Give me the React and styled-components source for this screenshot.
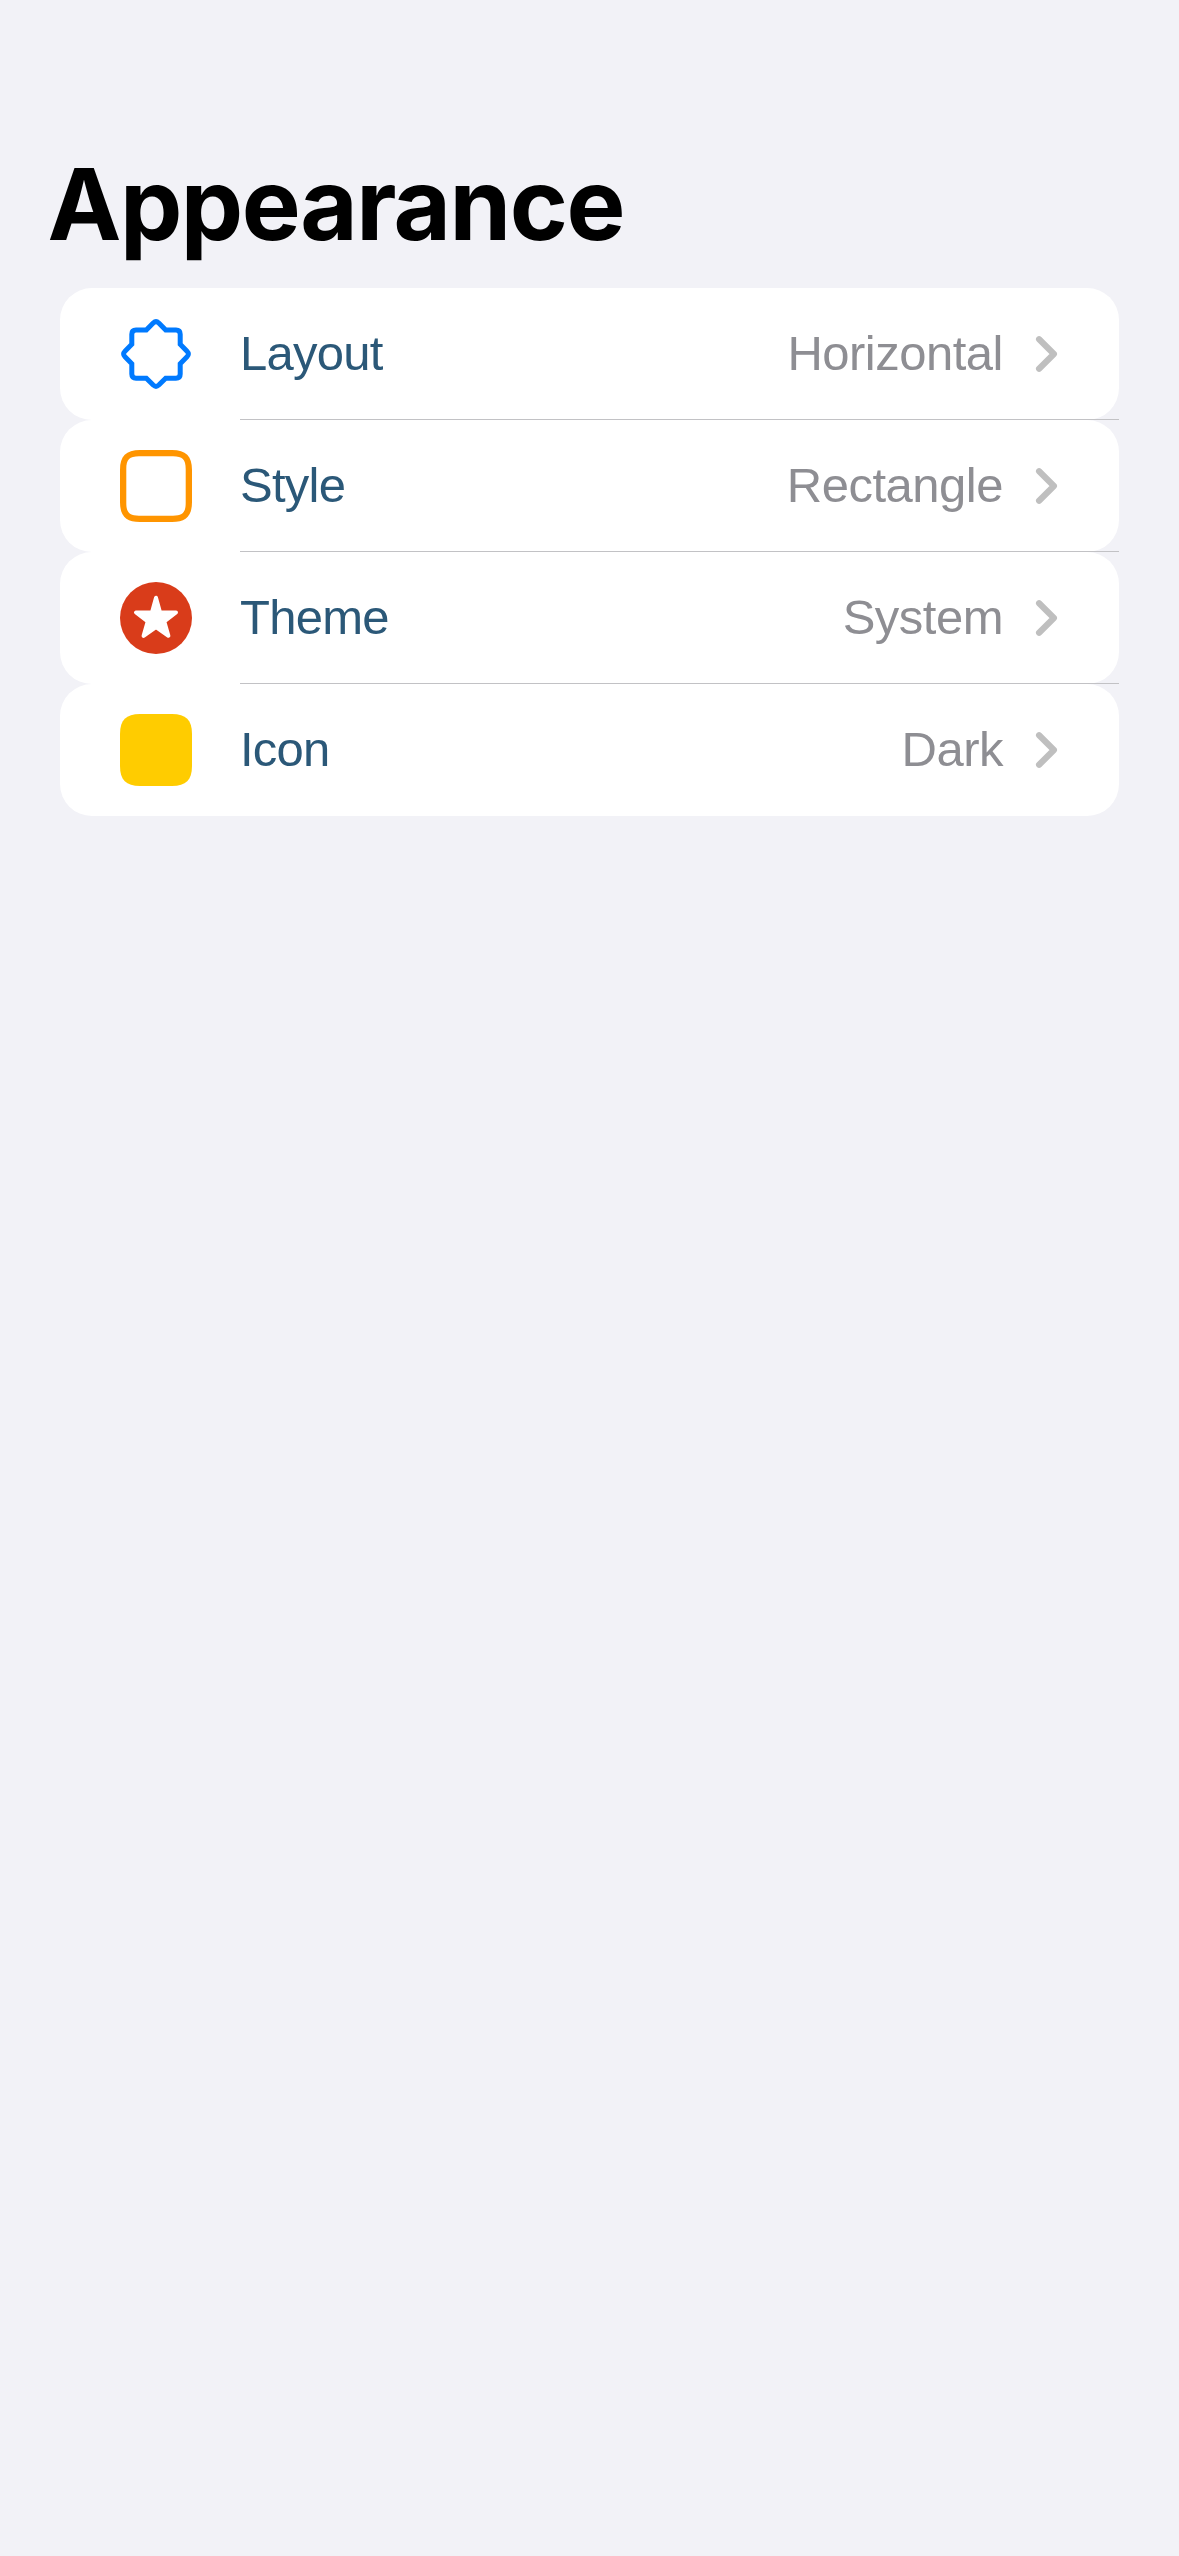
import React from "react";
import styled, { createGlobalStyle } from "styled-components";

const GlobalStyle = createGlobalStyle`
  *, *::before, *::after { box-sizing: border-box; }
  html, body { margin: 0; padding: 0; background: #f2f2f7; }
`;

const Screen = styled.main`
  width: 100%;
  min-height: 2556px;
  background: #f2f2f7;
  padding: 144px 60px 0;
  font-family: "Liberation Sans", Helvetica, Arial, sans-serif;
`;

const Title = styled.h1`
  margin: 0 0 24px -12.5px;
  height: 120px;
  line-height: 120px;
  font-family: Inter, sans-serif;
  font-size: 99px;
  font-weight: 700;
  letter-spacing: -1.5px;
  color: #000;
`;

const List = styled.ul`
  list-style: none;
  margin: 0;
  padding: 0;
  display: flex;
  flex-direction: column;
`;

const Row = styled.li`
  position: relative;
  display: flex;
  align-items: center;
  height: 132px;
  padding: 0 60px;
  background: #fff;
  border-radius: 32px;

  &:not(:last-child)::after {
    content: "";
    position: absolute;
    left: 180px;
    right: 0;
    bottom: 0;
    height: 1px;
    background: #c2c2c5;
  }
`;

const Glyph = styled.svg`
  flex: none;
  width: 72px;
  height: 72px;
  margin-right: 48px;
`;

const Label = styled.span`
  flex: 1;
  padding-bottom: 2px;
  font-size: 49px;
  line-height: 60px;
  letter-spacing: -0.75px;
  color: #2b5878;
`;

const Value = styled.span`
  padding-bottom: 2px;
  font-size: 49px;
  line-height: 60px;
  letter-spacing: -0.5px;
  color: #8e8e93;
`;

const Chevron = styled.svg`
  flex: none;
  width: 24px;
  height: 40px;
  margin-left: 32px;
`;

const SealIcon = () => (
  <Glyph viewBox="0 0 72 72" fill="none">
    <path
      d="M26.3 12 L33.2 5 Q36 2.4 38.8 5 L45.7 12 H56 Q60.2 12 60.2 16.2 V26.3 L67 33.2 Q69.8 36 67 38.8 L60.2 45.7 V56 Q60.2 60.2 56 60.2 H45.7 L38.8 67 Q36 69.6 33.2 67 L26.3 60.2 H16 Q11.8 60.2 11.8 56 V45.7 L5 38.8 Q2.2 36 5 33.2 L11.8 26.3 V16.2 Q11.8 12 16 12 Z"
      stroke="#007aff"
      strokeWidth="5"
    />
  </Glyph>
);

const FrameIcon = () => (
  <Glyph viewBox="0 0 72 72">
    <path
      fill="#ff9500"
      fillRule="evenodd"
      d="M20 0 H52 C66 0 72 6 72 20 V52 C72 66 66 72 52 72 H20 C6 72 0 66 0 52 V20 C0 6 6 0 20 0 Z M19 6.3 C9.5 6.3 6.3 9.5 6.3 19 V53 C6.3 62.5 9.5 65.7 19 65.7 H53 C62.5 65.7 65.7 62.5 65.7 53 V19 C65.7 9.5 62.5 6.3 53 6.3 Z"
    />
  </Glyph>
);

const StarIcon = () => (
  <Glyph viewBox="0 0 72 72">
    <circle cx="36" cy="36" r="36" fill="#d93c1a" />
    <path
      fill="#fff"
      stroke="#fff"
      strokeWidth="4"
      strokeLinejoin="round"
      d="M36 15.8 L40 30.2 L56 30.5 L44.3 39.5 L48.4 53.8 L36 45.2 L23.6 53.8 L27.7 39.5 L16 30.5 L32 30.2 Z"
    />
  </Glyph>
);

const SquareIcon = () => (
  <Glyph viewBox="0 0 72 72">
    <path
      fill="#ffcc00"
      d="M20 0 H52 C66 0 72 6 72 20 V52 C72 66 66 72 52 72 H20 C6 72 0 66 0 52 V20 C0 6 6 0 20 0 Z"
    />
  </Glyph>
);

const items = [
  { label: "Layout", value: "Horizontal", Icon: SealIcon },
  { label: "Style", value: "Rectangle", Icon: FrameIcon },
  { label: "Theme", value: "System", Icon: StarIcon },
  { label: "Icon", value: "Dark", Icon: SquareIcon },
];

export default function App() {
  return (
    <>
      <GlobalStyle />
      <Screen>
        <Title>Appearance</Title>
        <List>
          {items.map(({ label, value, Icon }) => (
            <Row key={label}>
              <Icon />
              <Label>{label}</Label>
              <Value>{value}</Value>
              <Chevron viewBox="0 0 24 40" fill="none">
                <path
                  d="M4.1 5.2 L18.9 20 L4.1 34.8"
                  stroke="#bfbfbf"
                  strokeWidth="6.2"
                  strokeLinecap="round"
                  strokeLinejoin="round"
                />
              </Chevron>
            </Row>
          ))}
        </List>
      </Screen>
    </>
  );
}
